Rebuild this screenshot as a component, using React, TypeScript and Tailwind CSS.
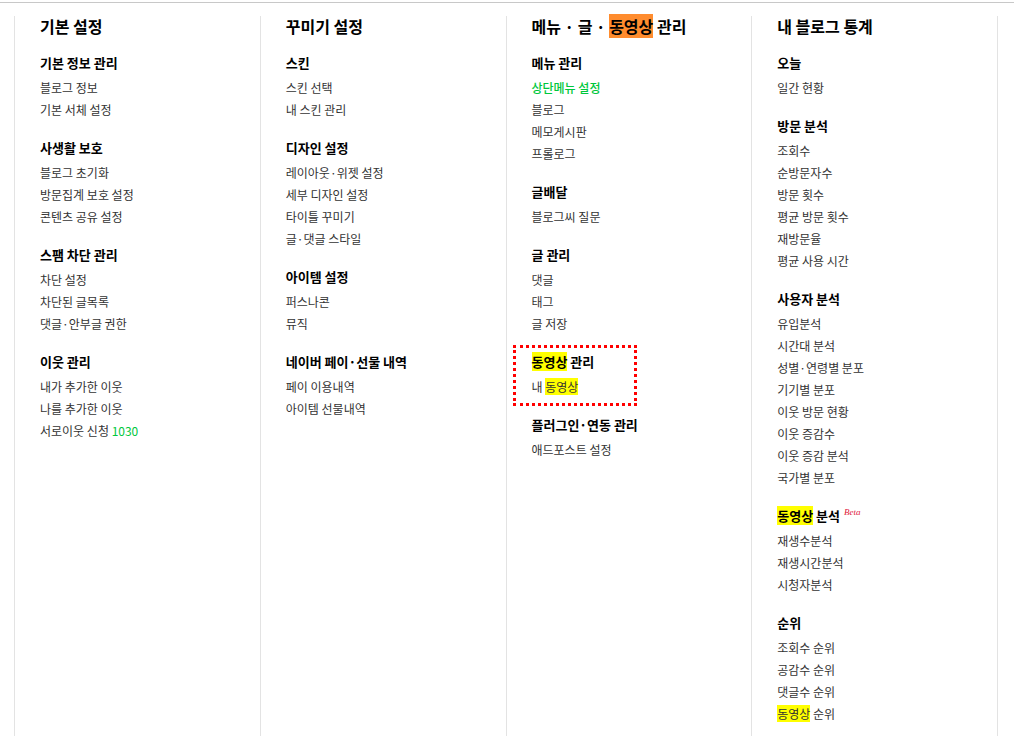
import React from "react";

type Item = { label: React.ReactNode; green?: boolean };
type Section = { title: React.ReactNode; items: Item[]; boxed?: boolean };
type Column = { title: React.ReactNode; sections: Section[] };

const Hl = ({ children }: { children: React.ReactNode }) => (
  <span className="bg-[#ffff00]">{children}</span>
);

const columns: Column[] = [
  {
    title: "기본 설정",
    sections: [
      { title: "기본 정보 관리", items: [{ label: "블로그 정보" }, { label: "기본 서체 설정" }] },
      {
        title: "사생활 보호",
        items: [{ label: "블로그 초기화" }, { label: "방문집계 보호 설정" }, { label: "콘텐츠 공유 설정" }],
      },
      {
        title: "스팸 차단 관리",
        items: [{ label: "차단 설정" }, { label: "차단된 글목록" }, { label: "댓글·안부글 권한" }],
      },
      {
        title: "이웃 관리",
        items: [
          { label: "내가 추가한 이웃" },
          { label: "나를 추가한 이웃" },
          {
            label: (
              <>
                서로이웃 신청 <span className="text-[#00c73c]">1030</span>
              </>
            ),
          },
        ],
      },
    ],
  },
  {
    title: "꾸미기 설정",
    sections: [
      { title: "스킨", items: [{ label: "스킨 선택" }, { label: "내 스킨 관리" }] },
      {
        title: "디자인 설정",
        items: [
          { label: "레이아웃·위젯 설정" },
          { label: "세부 디자인 설정" },
          { label: "타이틀 꾸미기" },
          { label: "글·댓글 스타일" },
        ],
      },
      { title: "아이템 설정", items: [{ label: "퍼스나콘" }, { label: "뮤직" }] },
      { title: "네이버 페이·선물 내역", items: [{ label: "페이 이용내역" }, { label: "아이템 선물내역" }] },
    ],
  },
  {
    title: (
      <>
        메뉴 · 글 · <span className="bg-[#ff8c2e]">동영상</span> 관리
      </>
    ),
    sections: [
      {
        title: "메뉴 관리",
        items: [{ label: "상단메뉴 설정", green: true }, { label: "블로그" }, { label: "메모게시판" }, { label: "프롤로그" }],
      },
      { title: "글배달", items: [{ label: "블로그씨 질문" }] },
      { title: "글 관리", items: [{ label: "댓글" }, { label: "태그" }, { label: "글 저장" }] },
      {
        title: (
          <>
            <Hl>동영상</Hl> 관리
          </>
        ),
        items: [
          {
            label: (
              <>
                내 <Hl>동영상</Hl>
              </>
            ),
          },
        ],
        boxed: true,
      },
      { title: "플러그인·연동 관리", items: [{ label: "애드포스트 설정" }] },
    ],
  },
  {
    title: "내 블로그 통계",
    sections: [
      { title: "오늘", items: [{ label: "일간 현황" }] },
      {
        title: "방문 분석",
        items: [
          { label: "조회수" },
          { label: "순방문자수" },
          { label: "방문 횟수" },
          { label: "평균 방문 횟수" },
          { label: "재방문율" },
          { label: "평균 사용 시간" },
        ],
      },
      {
        title: "사용자 분석",
        items: [
          { label: "유입분석" },
          { label: "시간대 분석" },
          { label: "성별·연령별 분포" },
          { label: "기기별 분포" },
          { label: "이웃 방문 현황" },
          { label: "이웃 증감수" },
          { label: "이웃 증감 분석" },
          { label: "국가별 분포" },
        ],
      },
      {
        title: (
          <>
            <Hl>동영상</Hl> 분석
            <span className="relative -top-[6px] ml-[4px] font-['Liberation_Serif',serif] text-[9px] font-normal italic leading-none text-[#e0203a]">
              Beta
            </span>
          </>
        ),
        items: [{ label: "재생수분석" }, { label: "재생시간분석" }, { label: "시청자분석" }],
      },
      {
        title: "순위",
        items: [
          { label: "조회수 순위" },
          { label: "공감수 순위" },
          { label: "댓글수 순위" },
          {
            label: (
              <>
                <Hl>동영상</Hl> 순위
              </>
            ),
          },
        ],
      },
    ],
  },
];

function SectionBlock({ section }: { section: Section }) {
  return (
    <div className="relative mt-4">
      {section.boxed && (
        <div className="pointer-events-none absolute -left-[19px] -top-[6px] h-[61px] w-[124px] border-[3px] border-dotted border-[#ff0000]" />
      )}
      <h3 className="mb-[3px] h-[22px] text-[13px] font-bold leading-[22px] text-black">{section.title}</h3>
      <ul>
        {section.items.map((item, i) => (
          <li
            key={i}
            className={`text-[12px] leading-[22px] ${item.green ? "font-medium text-[#00c73c]" : "text-[#333]"}`}
          >
            {item.label}
          </li>
        ))}
      </ul>
    </div>
  );
}

export default function App() {
  return (
    <div className="h-[736px] overflow-hidden bg-white font-['Noto_Sans_CJK_KR','Noto_Sans',sans-serif]">
      <div className="mt-[2px] border-t border-[#c8c8c8]" />
      <div className="ml-[14px] mt-[13px] grid w-[984px] grid-cols-4 border-r border-[#e3e3e3]">
        {columns.map((col, i) => (
          <div key={i} className="h-[740px] border-l border-[#e3e3e3] pl-[25px]">
            <h2 className="text-[16px] font-bold leading-[20px] text-black">{col.title}</h2>
            {col.sections.map((s, j) => (
              <SectionBlock key={j} section={s} />
            ))}
          </div>
        ))}
      </div>
    </div>
  );
}
